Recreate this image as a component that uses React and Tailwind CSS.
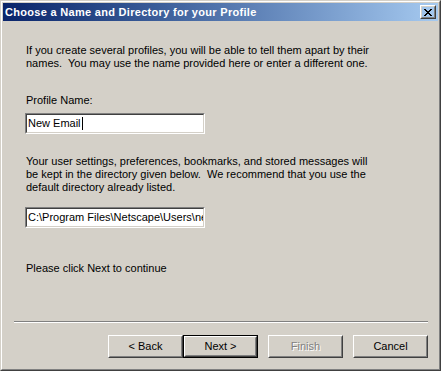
import React from "react";

function Raised({ className = "", children, isDefault = false }) {
  const inner = (
    <div className="h-full w-full border border-white border-r-[#404040] border-b-[#404040]">
      <div className="h-full w-full border border-[#d4d0c8] border-r-[#808080] border-b-[#808080] flex items-center justify-center">
        {children}
      </div>
    </div>
  );
  if (isDefault) {
    return <div className={"border border-black " + className}>{inner}</div>;
  }
  return <div className={className}>{inner}</div>;
}

function Sunken({ className = "", children }) {
  return (
    <div className={"border border-[#808080] border-r-white border-b-white " + className}>
      <div className="h-full w-full border border-[#404040] border-r-[#d4d0c8] border-b-[#d4d0c8] bg-white flex items-center overflow-hidden">
        {children}
      </div>
    </div>
  );
}

export default function App() {
  return (
    <div className="w-[441px] h-[371px] bg-[#d4d0c8] text-black text-[11px] leading-[13px] font-['Liberation_Sans',Arial,sans-serif]">
      <div className="h-full border border-[#d4d0c8] border-r-[#404040] border-b-[#404040]">
        <div className="h-full border border-white border-r-[#808080] border-b-[#808080] p-px flex flex-col">
          {/* Title bar */}
          <div className="h-[18px] shrink-0 flex items-center bg-gradient-to-r from-[#0a246a] to-[#a6caf0]">
            <div className="flex-1 pl-[2px] text-white font-bold text-[11px] tracking-[0.3px] whitespace-nowrap">
              Choose a Name and Directory for your Profile
            </div>
            <Raised className="w-[16px] h-[14px] mr-[2px]">
              <svg width="8" height="7" viewBox="0 0 8 7" shapeRendering="crispEdges">
                <path
                  d="M0 0h2v1h-2zM6 0h2v1h-2zM1 1h2v1h-2zM5 1h2v1h-2zM2 2h4v1h-4zM3 3h2v1h-2zM2 4h4v1h-4zM1 5h2v1h-2zM5 5h2v1h-2zM0 6h2v1h-2zM6 6h2v1h-2z"
                  fill="#000"
                />
              </svg>
            </Raised>
          </div>

          {/* Content */}
          <div className="flex flex-col">
            <p className="mt-[23px] ml-[23px]">
              If you create several profiles, you will be able to tell them apart by their
              <br />
              names.&nbsp; You may use the name provided here or enter a different one.
            </p>
            <p className="mt-[24px] ml-[23px]">Profile Name:</p>
            <Sunken className="mt-[6px] ml-[22px] w-[180px] h-[21px]">
              <span className="pl-[1px] whitespace-nowrap">New Email</span>
              <span className="inline-block w-px h-[13px] bg-black ml-px"></span>
            </Sunken>
            <p className="mt-[21px] ml-[23px]">
              Your user settings, preferences, bookmarks, and stored messages will
              <br />
              be kept in the directory given below.&nbsp; We recommend that you use the
              <br />
              default directory already listed.
            </p>
            <Sunken className="mt-[13px] ml-[22px] w-[180px] h-[21px]">
              <span className="pl-[1px] whitespace-nowrap">C:\Program Files\Netscape\Users\newemail</span>
            </Sunken>
            <p className="mt-[34px] ml-[23px]">Please click Next to continue</p>

            <div className="mt-[46px] ml-[11px] w-[414px] border-t border-[#808080] border-b border-b-white"></div>

            <div className="mt-[12px] ml-[105px] flex">
              <Raised className="w-[75px] h-[23px]">&lt; Back</Raised>
              <Raised isDefault className="w-[75px] h-[23px]">Next &gt;</Raised>
              <Raised className="w-[75px] h-[23px] ml-[10px]">
                <span className="text-[#808080] [text-shadow:1px_1px_0_#ffffff]">Finish</span>
              </Raised>
              <Raised className="w-[75px] h-[23px] ml-[10px]">Cancel</Raised>
            </div>
          </div>
        </div>
      </div>
    </div>
  );
}
